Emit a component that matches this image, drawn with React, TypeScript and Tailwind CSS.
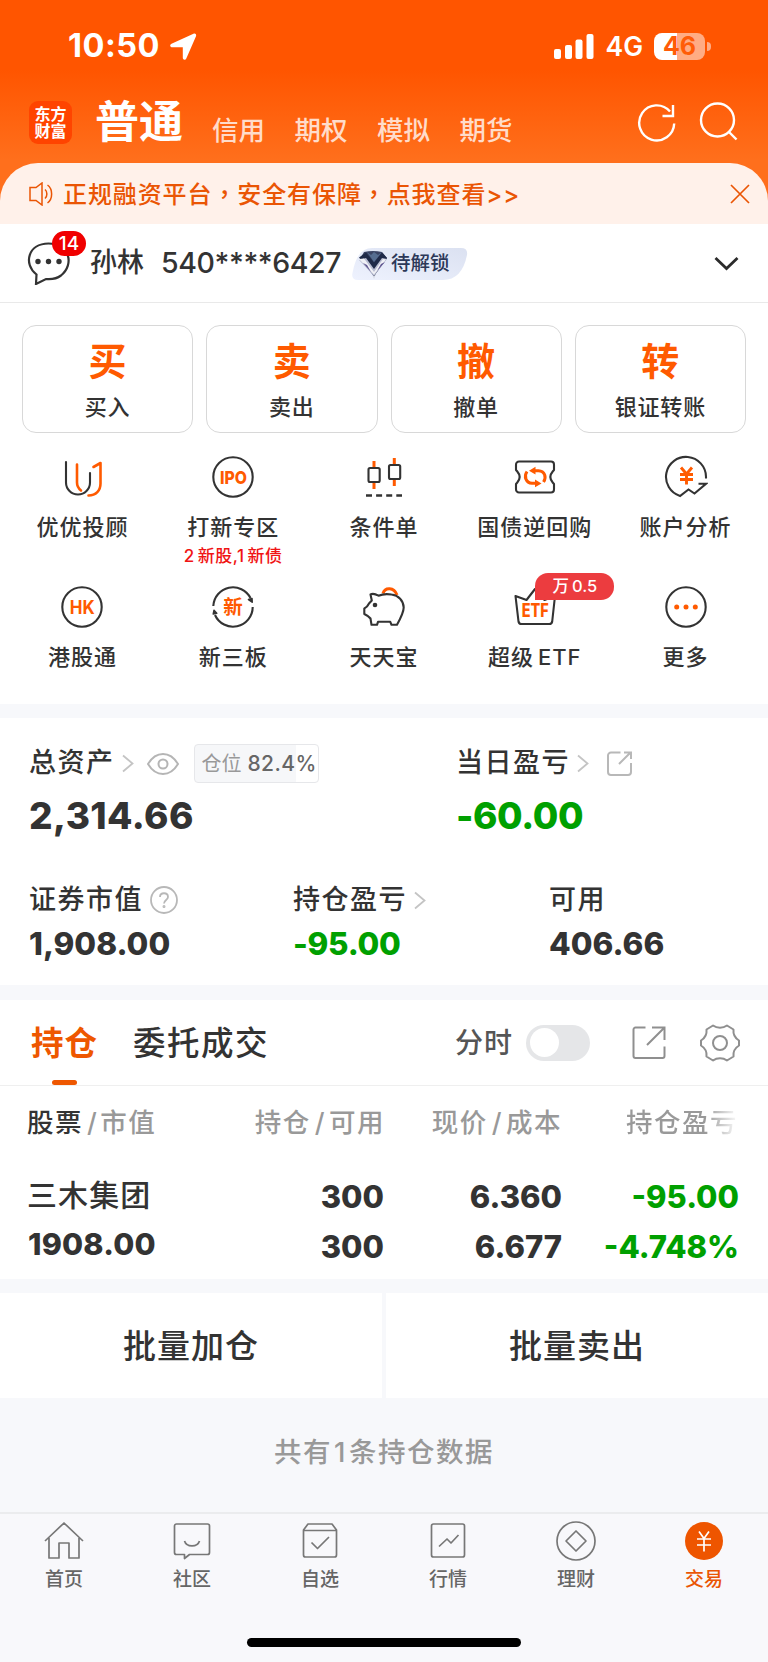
import type { ReactNode } from 'react';

const INK = '#333333';
const ORANGE = '#ff5a00';

const markets = ['信用', '期权', '模拟', '期货'];

const actions = [
  { glyph: '买', label: '买入' },
  { glyph: '卖', label: '卖出' },
  { glyph: '撤', label: '撤单' },
  { glyph: '转', label: '银证转账' },
];

function Icon({ children }: { children: ReactNode }) {
  return (
    <svg className="w-11 h-11 block" viewBox="0 0 44 44" fill="none" stroke={INK} strokeWidth="2.100" strokeLinejoin="round">
      {children}
    </svg>
  );
}

const shortcuts: { label: ReactNode; note?: ReactNode; badge?: ReactNode; icon: ReactNode }[] = [
  {
    label: '优优投顾',
    icon: (
      <Icon>
        <path d="M6 7v20.500a12 12 0 0 0 24 0V18" strokeLinecap="round" />
        <path d="M17 9.500v18c0 3.500 1.500 6 4 8" stroke={ORANGE} strokeWidth="2.600" strokeLinecap="round" />
        <path d="M33.500 12l7-4v20.500c0 7-4.500 12-12 12" stroke={ORANGE} strokeWidth="2.600" strokeLinecap="round" />
      </Icon>
    ),
  },
  {
    label: '打新专区',
    note: <>2<span className="ml-[3px]">新股,1</span><span className="ml-[3px]">新债</span></>,
    icon: (
      <Icon>
        <circle cx="22" cy="22" r="19.700" />
        <text x="22.500" y="28.500" textAnchor="middle" textLength="27" lengthAdjust="spacingAndGlyphs" fontSize="18" fontWeight="800" fontFamily="Inter" fill={ORANGE} stroke="none">IPO</text>
      </Icon>
    ),
  },
  {
    label: '条件单',
    icon: (
      <Icon>
        <path d="M12 6v6M12 27v7M32.300 3v6M32.300 24v7" stroke={ORANGE} strokeWidth="3" />
        <rect x="6.500" y="13" width="11.200" height="14" rx="1.500" />
        <rect x="27" y="10" width="11.200" height="14" rx="1.500" />
        <path d="M4 40.500h36" strokeWidth="2.400" strokeDasharray="6 4.100" />
      </Icon>
    ),
  },
  {
    label: '国债逆回购',
    icon: (
      <Icon>
        <path d="M6 6.500h32a3 3 0 0 1 3 3V15l-1.300 1.500c-3 3.500-3 7.500 0 11L41 29v5.500a3 3 0 0 1-3 3H6a3 3 0 0 1-3-3V29l1.300-1.500c3-3.500 3-7.500 0-11L3 15V9.500a3 3 0 0 1 3-3z" />
        <path d="M14 16.500c-3.500 5-1 11.500 5 11.800h5M30.500 27c3.500-5 1-11-5-11.300h-5" stroke={ORANGE} strokeWidth="3" />
        <path d="M22.500 11.800v7.800l-6.500-3.900zM22 24.500v7.800l6.500-3.900z" fill={ORANGE} stroke="none" />
      </Icon>
    ),
  },
  {
    label: '账户分析',
    icon: (
      <Icon>
        <path d="M42 23.500v-1.800a20 20 0 1 0-26 19.300l8.500-6.500 6 4 11.500-9.800h-7.500" strokeLinejoin="miter" />
        <path d="M17 12.500l5.500 6.500 5.500-6.500M22.500 19v10.500M16 19.500h13M16 24.500h13" stroke={ORANGE} strokeWidth="2.900" />
      </Icon>
    ),
  },
  {
    label: '港股通',
    icon: (
      <Icon>
        <circle cx="22" cy="22" r="19.700" />
        <text x="22.300" y="28.700" textAnchor="middle" textLength="25" lengthAdjust="spacingAndGlyphs" fontSize="18.500" fontWeight="700" fontFamily="Inter" fill={ORANGE} stroke="none">HK</text>
      </Icon>
    ),
  },
  {
    label: '新三板',
    icon: (
      <Icon>
        <path d="M2.300 21A19.700 19.700 0 0 1 39.500 13M41.700 22a19.700 19.700 0 0 1-37.700 8" />
        <path d="M37.500 14.500l3.500-1 .2 3.700zM2.300 29l.7-3.700 2.700 3z" fill={INK} strokeWidth="1.600" />
        <text x="22" y="29" textAnchor="middle" fontSize="19.500" fontWeight="700" fontFamily="Noto Sans CJK SC" fill={ORANGE} stroke="none">新</text>
      </Icon>
    ),
  },
  {
    label: '天天宝',
    icon: (
      <Icon>
        <path d="M21 8.500c2-6.500 11-6.500 14 1.500" stroke={ORANGE} strokeWidth="3" />
        <path d="M8.500 9.500c2.500-1.500 5-.500 8 1.200 3.500-1.500 8-2 13-1.200 7 .8 12 6 12.200 13 0 5-2.700 10-6.700 17.300h-5.500l-1.200-3H16l-1 3H9.500L8.500 33.500c-1.500-2-3.500-3.200-6.200-4.500v-5.500c2.500-1 3.500-2.500 4.700-5l2.800-3z" fill="white" />
        <circle cx="13" cy="20" r="2.300" fill={INK} stroke="none" />
      </Icon>
    ),
  },
  {
    label: <>超级<span className="ml-1">ETF</span></>,
    badge: <>万<span className="ml-[3px]">0.5</span></>,
    icon: (
      <Icon>
        <path d="M2.500 11L13.500 15 22 4l9.500 11 10.500-4-2.800 25.500a3 3 0 0 1-3 2.500H8.500a3 3 0 0 1-3-2.500z" />
        <text x="22.300" y="32" textAnchor="middle" textLength="27" lengthAdjust="spacingAndGlyphs" fontSize="18.500" fontWeight="800" fontFamily="Inter" fill={ORANGE} stroke="none">ETF</text>
      </Icon>
    ),
  },
  {
    label: '更多',
    icon: (
      <Icon>
        <circle cx="22" cy="22" r="19.700" />
        <g fill={ORANGE} stroke="none">
          <circle cx="12.700" cy="22" r="2.500" />
          <circle cx="22" cy="22" r="2.500" />
          <circle cx="31.300" cy="22" r="2.500" />
        </g>
      </Icon>
    ),
  },
];

const tabs = [
  { label: '首页', icon: <path d="M2 21L21 3l19 18M6 18v20h10V23h10v15h10V18" /> },
  { label: '社区', icon: <path d="M5.500 4h31a2 2 0 0 1 2 2v26.500a2 2 0 0 1-2 2H18.500l-5 4v-4h-8a2 2 0 0 1-2-2V6a2 2 0 0 1 2-2zM13.500 21c2 6.500 13 6.500 15 0" /> },
  { label: '自选', icon: <path d="M4.500 10L9 4h24l4.500 6v25a2 2 0 0 1-2 2h-29a2 2 0 0 1-2-2zM4.500 10.500h33M12.500 22.500l6 6L30 17" /> },
  { label: '行情', icon: <path d="M6.500 4h29a2 2 0 0 1 2 2v29a2 2 0 0 1-2 2h-29a2 2 0 0 1-2-2V6a2 2 0 0 1 2-2zM12 26.500l8-7.500 4 4L31.500 15" /> },
  { label: '理财', icon: <><circle cx="21" cy="21" r="19" /><path d="M21 11l10 10-10 10-10-10z" /></> },
];

function Chevron() {
  return (
    <svg className="w-3 h-[19px]" viewBox="0 0 12 19" fill="none" stroke="#c4c4c4" strokeWidth="1.800">
      <path d="M1 1.500l9.500 8-9.500 8" />
    </svg>
  );
}

function StatusBar() {
  return (
    <div className="flex items-center h-[93px] pl-[68px] pr-[57px] text-white">
      <span className="text-[32.500px] font-bold tracking-[0.500px]">10:50</span>
      <svg className="w-7 h-7 ml-[9px]" viewBox="0 0 28 28" fill="white">
        <path d="M24.500.7c1.800-.7 3.200.7 2.500 2.500L17.300 25.500c-.9 2-3.500 1.500-3.500-.7V14.200H3.200C1 14.200.4 11.600 2.500 10.700z" />
      </svg>
      <svg className="w-10 h-[25px] ml-auto" viewBox="0 0 40 25" fill="white">
        <rect x="0" y="15" width="7" height="10" rx="2" />
        <rect x="11" y="11" width="7" height="14" rx="2" />
        <rect x="21.500" y="5.500" width="7" height="19.500" rx="2" />
        <rect x="32.500" y="0" width="7" height="25" rx="2" />
      </svg>
      <span className="ml-3 text-[26.500px] font-semibold">4G</span>
      <div className="ml-[11px] w-[51px] h-[27px] rounded-[8px] bg-[linear-gradient(90deg,#fff_46%,#ffac84_46%)] text-[#ff5c08] text-[25px] font-bold leading-[27px] text-center">
        46
      </div>
      <div className="ml-[2px] w-1 h-[9px] rounded-r-full bg-[#ffac84]" />
    </div>
  );
}

function Header() {
  return (
    <header className="h-[202px] bg-[linear-gradient(#ff5500_70px,#ff6f1c_160px)]">
      <StatusBar />
      <div className="flex h-[71px] pl-[29px] pr-[29px]">
        <div className="mt-[8px] w-[43px] h-[43px] rounded-[9px] bg-[#ff4400] text-white font-bold text-[16px] leading-[17px] flex items-center justify-center">
          <span className="w-8">东方财富</span>
        </div>
        <div className="ml-[23px] mt-[7px] text-[44px] leading-[44px] font-bold text-white">普通</div>
        <div className="flex ml-[29px] mt-[24px] gap-[30px] text-[26.500px] leading-[26px] font-medium text-[#ffdcca]">
          {markets.map((m) => (
            <span key={m} className="w-[52.500px] whitespace-nowrap">{m}</span>
          ))}
        </div>
        <svg className="ml-auto mt-[9px] w-10 h-10" viewBox="0 0 40 40" fill="none" stroke="white" strokeWidth="2.400">
          <path d="M37.200 21.500A17.500 17.500 0 1 1 33 9.500M36 3v11H25.500" />
        </svg>
        <svg className="ml-[22px] mt-[9px] w-10 h-10" viewBox="0 0 40 40" fill="none" stroke="white" strokeWidth="2.400">
          <circle cx="18.500" cy="18" r="16.500" />
          <path d="M29.500 29.500l8 8" />
        </svg>
      </div>
    </header>
  );
}

function Notice() {
  return (
    <div className="-mt-[39px] h-[61px] rounded-t-[38px] bg-[#fff1ea] flex items-center pl-[29px] pr-[18px] text-[#ea5504]">
      <svg className="w-6 h-6 shrink-0" viewBox="0 0 24 24" fill="none" stroke="#ea5504" strokeWidth="1.500">
        <path d="M1 5.500h6L13 1v22l-6-4.500H1zM16 7.500c2.500 2 2.500 7 0 9M18.500 3c5.500 4 5.500 14 0 18" />
      </svg>
      <span className="ml-[10px] text-[24px] tracking-[0.900px] font-medium whitespace-nowrap">
        正规融资平台<span className="font-['Noto_Sans_CJK_TC']">，</span>安全有保障<span className="font-['Noto_Sans_CJK_TC']">，</span>点我查看&gt;&gt;
      </span>
      <svg className="w-5 h-5 ml-auto" viewBox="0 0 20 20" fill="none" stroke="#ea5504" strokeWidth="1.700">
        <path d="M1 1l18 18M19 1L1 19" />
      </svg>
    </div>
  );
}

function Account() {
  return (
    <div className="h-[79px] border-b border-[#e9e9e9] flex items-center pl-[27px] pr-[29px] pt-px">
      <div className="relative w-[43px] h-[43px]">
        <svg className="w-full h-full" viewBox="0 0 43 43" fill="none" stroke={INK} strokeWidth="2.200">
          <path d="M9.500 32.500C-4 22 1 1.500 21.500 1.500S48 22 34 33.500c-4 3-9.500 4-15 3.500l-10 5z" />
          <g fill={INK} stroke="none">
            <circle cx="11" cy="19.500" r="2.700" />
            <circle cx="21.500" cy="19.500" r="2.700" />
            <circle cx="32" cy="19.500" r="2.700" />
          </g>
        </svg>
        <div className="absolute left-[25px] -top-[11px] w-[34px] h-[25px] rounded-full bg-[#f00000] text-white text-[19px] leading-[25px] font-medium text-center">14</div>
      </div>
      <span className="ml-[20px] text-[27px] font-medium">孙林</span>
      <span className="ml-[17px] w-[180px] text-[28.500px] tracking-[-0.400px] font-medium">540****6427</span>
      <div className="relative ml-[11px] w-[116px] h-8 flex items-center">
        <svg className="absolute inset-0 w-full h-full" viewBox="0 0 116 32">
          <defs>
            <linearGradient id="tag" x1="1" y1="0" x2="0" y2="1">
              <stop offset="0" stopColor="#dbe1f1" />
              <stop offset="1" stopColor="#eef2fe" />
            </linearGradient>
          </defs>
          <path d="M20 0h89q7 0 6 7-5 25-24 25H6q-7 0-5.500-7Q5 0 20 0z" fill="url(#tag)" />
          <path d="M20 26l2 5 2-5z" fill="#d5d8e4" />
          <path d="M12 4q9-2 18 0l5 6-13 18L8 11z" fill="#3a4464" />
          <path d="M7 9.500l7-5 8 10 8-10 5 5.500-13 18z" fill="#1f2a48" />
          <path d="M7 12l7-2 8 11 8-11 5 1-13 17z" fill="#b9bdd2" />
          <path d="M7 11l5-.5 10 13.500 9-13 3 .5-12 15z" fill="#f0f1f6" />
          <path d="M15 4l4 3 3-3 4 3 4-3-8 10z" fill="#566d90" />
          <path d="M11 15l4 2 4 7zM33 14l-4 2-4 7z" fill="#5f5590" />
        </svg>
        <span className="relative ml-[39px] text-[19.500px] font-medium text-[#2c3858] whitespace-nowrap">待解锁</span>
      </div>
      <svg className="ml-auto w-[25px] h-[15px]" viewBox="0 0 25 15" fill="none" stroke="#2b2b2b" strokeWidth="2.800">
        <path d="M1.500 2l11 10.500L23.500 2" />
      </svg>
    </div>
  );
}

function Shortcuts() {
  return (
    <section className="h-[401px]">
      <div className="grid grid-cols-4 gap-[13px] px-[22px] pt-[22px]">
        {actions.map((a) => (
          <div key={a.label} className="h-[108px] rounded-[14px] border border-[#d8d8d8] flex flex-col items-center">
            <span className="mt-[16px] text-[38px] leading-[38px] font-bold text-[#ff5a00]">{a.glyph}</span>
            <span className="mt-[15px] text-[22px] leading-[24px] tracking-[0.800px] font-medium">{a.label}</span>
          </div>
        ))}
      </div>
      <div className="grid grid-cols-5 px-[7px] pt-[22px]">
        {shortcuts.map((s, i) => (
          <div key={i} className="relative h-[129.500px] flex flex-col items-center whitespace-nowrap">
            {s.icon}
            {s.badge && (
              <span className="absolute left-[76px] -top-[12px] w-[79px] h-[27px] rounded-[13px] rounded-bl-none bg-[#ec3c3f] text-white text-[16.500px] leading-[27px] font-medium text-center">{s.badge}</span>
            )}
            <span className="mt-[16px] text-[22px] leading-[24px] tracking-[1px] font-medium">{s.label}</span>
            {s.note && <span className="mt-[7px] text-[17px] leading-[20px] tracking-[0.500px] font-medium text-[#f01414]">{s.note}</span>}
          </div>
        ))}
      </div>
    </section>
  );
}

function Assets() {
  return (
    <section className="h-[267px] px-[29px] pt-[26px]">
      <div className="flex">
        <div className="w-[427px]">
          <div className="flex items-center h-[39px]">
            <span className="text-[27px] tracking-[1.500px] font-medium">总资产</span>
            <span className="ml-[7px] flex"><Chevron /></span>
            <svg className="ml-[13px] w-8 h-[22px]" viewBox="0 0 32 22" fill="none" stroke="#b5b5b5" strokeWidth="2">
              <path d="M1 11Q7 1 16 1t15 10q-6 10-15 10T1 11z" />
              <circle cx="16" cy="11" r="4.500" />
            </svg>
            <div className="ml-[15px] w-[125px] h-[39px] rounded-[4px] border border-[#e6e7ea] bg-[linear-gradient(90deg,#f6f7f9_82.400%,#fff_82.400%)] flex items-center pl-[7px] text-[20px] text-[#999] whitespace-nowrap">
              仓位<span className="ml-[6px] text-[21px] font-medium tracking-[0.400px] text-[#666]">82.4%</span>
            </div>
          </div>
          <div className="mt-[14px] text-[37px] leading-[37px] font-extrabold tracking-[0.400px]">2,314.66</div>
        </div>
        <div>
          <div className="flex items-center h-[39px]">
            <span className="text-[27px] tracking-[1.500px] font-medium">当日盈亏</span>
            <span className="ml-[7px] flex"><Chevron /></span>
            <svg className="ml-[18px] w-[25px] h-[25px]" viewBox="0 0 25 25" fill="none" stroke="#b8b8b8" strokeWidth="2">
              <path d="M13.500 1.500H4a3 3 0 0 0-3 3V21a3 3 0 0 0 3 3h17a3 3 0 0 0 3-3v-9M12 13L23.500 1.500M17 1.500h7V8" />
            </svg>
          </div>
          <div className="mt-[14px] text-[37px] leading-[37px] font-extrabold tracking-[-0.400px] text-[#00a000]">-60.00</div>
        </div>
      </div>
      <div className="flex mt-[50px]">
        <div className="w-[264px]">
          <div className="flex items-center h-[32px]">
            <span className="text-[27px] tracking-[1.500px] font-medium">证券市值</span>
            <svg className="ml-[7px] w-7 h-7" viewBox="0 0 28 28" fill="none" stroke="#b8b8b8" strokeWidth="1.800">
              <circle cx="14" cy="14" r="13" />
              <path d="M10 11c0-5 8-5 8 0 0 3-4 3-4 6.500" />
              <circle cx="14" cy="20.500" r=".6" />
            </svg>
          </div>
          <div className="mt-[12px] text-[31.500px] leading-[32px] font-extrabold">1,908.00</div>
        </div>
        <div className="w-[256px]">
          <div className="flex items-center h-[32px]">
            <span className="text-[27px] tracking-[1.500px] font-medium">持仓盈亏</span>
            <span className="ml-[7px] flex"><Chevron /></span>
          </div>
          <div className="mt-[12px] text-[31.500px] leading-[32px] font-extrabold tracking-[-0.300px] text-[#00a000]">-95.00</div>
        </div>
        <div>
          <div className="flex items-center h-[32px] text-[27px] tracking-[1.500px] font-medium">可用</div>
          <div className="mt-[12px] text-[31.500px] leading-[32px] font-extrabold">406.66</div>
        </div>
      </div>
    </section>
  );
}

function Positions() {
  return (
    <section>
      <div className="h-[86px] border-b border-[#efefef] flex pl-[31px] pr-[28px]">
        <div className="relative">
          <span className="block mt-[23px] text-[32.500px] leading-[42px] tracking-[1px] font-bold text-[#ee5700]">持仓</span>
          <i className="absolute left-[20.500px] bottom-0 w-[25.500px] h-[5px] rounded-[2.500px] bg-[#ee5700]" />
        </div>
        <span className="ml-[35px] mt-[23px] text-[32.500px] leading-[42px] tracking-[1.500px] font-medium">委托成交</span>
        <div className="ml-auto mt-[24px] h-[37px] flex items-center">
          <span className="text-[28px] tracking-[1px] text-[#555] font-medium">分时</span>
          <div className="ml-[13px] w-[64px] h-[36px] rounded-full bg-[#e5e6e8] p-[3.500px]">
            <div className="w-[29px] h-[29px] rounded-full bg-white" />
          </div>
          <svg className="ml-[42px] w-[34px] h-[34px]" viewBox="0 0 34 34" fill="none" stroke="#8f8f8f" strokeWidth="2">
            <path d="M13.500 1.500H3.500a2 2 0 0 0-2 2V30a2 2 0 0 0 2 2h27a2 2 0 0 0 2-2V20.500M15 19L32 2M20 1.500h12.500V14" />
          </svg>
          <svg className="ml-[34px] w-10 h-[38px]" viewBox="0 0 40 38" fill="none" stroke="#8f8f8f" strokeWidth="2" strokeLinejoin="round">
            <path d="M13 1.500C17 4.500 23 4.500 27 1.500L33.500 5.500C33 10 35 14 39 16.500v5C35 24 33 28 33.500 32.500L27 36.500c-4-3-10-3-14 0L6.500 32.500C7 28 5 24 1 21.500v-5C5 14 7 10 6.500 5.500z" />
            <circle cx="20" cy="19" r="7" />
          </svg>
        </div>
      </div>

      <div className="flex h-[73px] items-center pl-[27px] pr-[29px] text-[26.500px] tracking-[1.500px] font-medium text-[#999] whitespace-nowrap">
        <div className="w-[205px]"><span className="text-[#333]">股票</span><span className="ml-[4px] mr-[2px]">/</span>市值</div>
        <div className="w-[153px] text-right">持仓<span className="ml-[4px] mr-[3px]">/</span>可用</div>
        <div className="w-[177px] text-right">现价<span className="ml-[4px] mr-[3px]">/</span>成本</div>
        <div className="ml-auto w-[113px] overflow-hidden bg-[linear-gradient(90deg,#999_70%,#fff)] bg-clip-text text-transparent">持仓盈亏</div>
      </div>

      <div className="flex h-[120px] pl-[28px] pr-[29px] pt-[18px] text-[31px] font-extrabold">
        <div className="w-[178px]">
          <div className="h-[36px] leading-[36px] text-[30px] tracking-[1.100px] font-medium -ml-px">三木集团</div>
          <div className="mt-[15px] leading-[32px] text-[30.500px] tracking-[0.200px]">1908.00</div>
        </div>
        <div className="w-[178px] text-right leading-[50px] -mt-[5px]">300<br />300</div>
        <div className="w-[178px] text-right leading-[50px] -mt-[5px]">6.360<br />6.677</div>
        <div className="flex-1 text-right leading-[50px] -mt-[5px] text-[#00a000] whitespace-nowrap">-95.00<br />-4.748%</div>
      </div>
    </section>
  );
}

export default function App() {
  return (
    <div className="w-[768px] h-[1662px] overflow-hidden flex flex-col bg-[#f7f8fb] text-[#333] font-['Inter','Noto_Sans_CJK_SC',sans-serif]">
      <div className="bg-white">
        <Header />
        <Notice />
        <Account />
        <Shortcuts />
      </div>
      <div className="mt-[14px] bg-white"><Assets /></div>
      <div className="mt-[15px] bg-white"><Positions /></div>

      <div className="mt-[14px] grid grid-cols-2 gap-1 text-[33px] tracking-[1px] font-medium text-center leading-[105px]">
        <div className="bg-white h-[105px] pt-[2px] leading-[103px]">批量加仓</div>
        <div className="bg-white h-[105px] pt-[2px] leading-[103px]">批量卖出</div>
      </div>
      <div className="h-[114px] pb-[4px] flex items-center justify-center text-[27.500px] tracking-[1.500px] font-medium text-[#999]">
        共有<span className="mx-[2px]">1</span>条持仓数据
      </div>

      <nav className="flex-1 border-t-2 border-[#ebecee] bg-[#f8f8fb] flex flex-col items-center">
        <div className="w-full grid grid-cols-6 pt-[6px] text-[19px] leading-[22px] font-medium text-[#666]">
          {tabs.map((t) => (
            <div key={t.label} className="flex flex-col items-center">
              <svg className="w-[42px] h-[42px]" viewBox="0 0 42 42" fill="none" stroke="#777" strokeWidth="1.700" strokeLinejoin="round">{t.icon}</svg>
              <span className="mt-[7px]">{t.label}</span>
            </div>
          ))}
          <div className="flex flex-col items-center text-[#ea5504]">
            <svg className="w-[42px] h-[42px]" viewBox="0 0 42 42" fill="none" stroke="white" strokeWidth="1.700">
              <circle cx="21" cy="21" r="19" fill="#ee5500" stroke="none" />
              <path d="M16 11.500l5 7 5-7M21 18.500v13M14 19h14M14 25h14" />
            </svg>
            <span className="mt-[7px]">交易</span>
          </div>
        </div>
        <div className="mt-auto mb-[15px] w-[274px] h-[9px] rounded-full bg-black" />
      </nav>
    </div>
  );
}
